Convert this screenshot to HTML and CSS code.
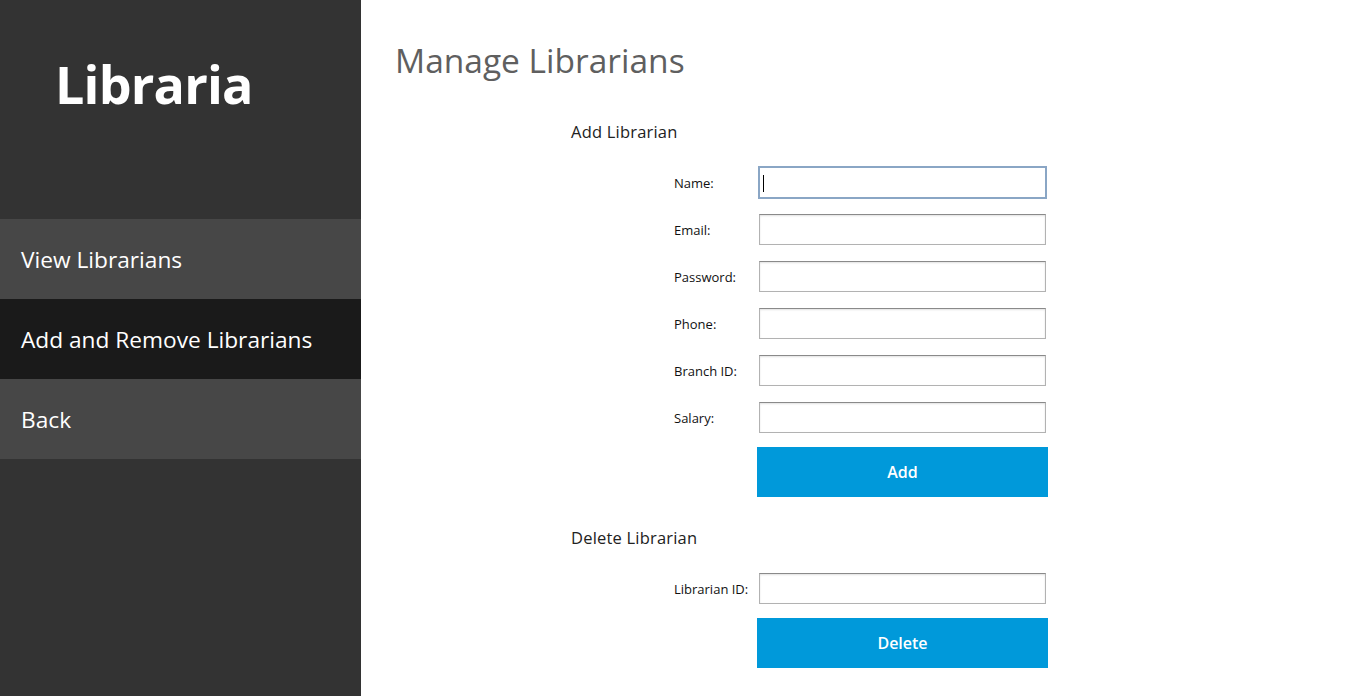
FILE: index.html
```html
<!DOCTYPE html>
<html lang="en">
<head>
<meta charset="utf-8">
<title>Libraria - Manage Librarians</title>
<link rel="stylesheet" href="styles.css">
</head>
<body>
<div class="app">
  <aside class="sidebar">
    <div class="logo">Libraria</div>
    <nav class="nav">
      <a class="nav-item" href="#">View Librarians</a>
      <a class="nav-item active" href="#">Add and Remove Librarians</a>
      <a class="nav-item" href="#">Back</a>
    </nav>
  </aside>
  <main class="main">
    <h1 class="title">Manage Librarians</h1>
    <section class="form-section add-section">
      <h2 class="section-title">Add Librarian</h2>
      <div class="form">
        <label class="label">Name:</label>
        <div class="field-wrap"><input class="field focused" type="text"><span class="caret"></span></div>
        <label class="label">Email:</label>
        <div class="field-wrap"><input class="field" type="text"></div>
        <label class="label">Password:</label>
        <div class="field-wrap"><input class="field" type="password"></div>
        <label class="label">Phone:</label>
        <div class="field-wrap"><input class="field" type="text"></div>
        <label class="label">Branch ID:</label>
        <div class="field-wrap"><input class="field" type="text"></div>
        <label class="label">Salary:</label>
        <div class="field-wrap"><input class="field" type="text"></div>
        <span></span>
        <button class="btn" type="button">Add</button>
      </div>
    </section>
    <section class="form-section delete-section">
      <h2 class="section-title">Delete Librarian</h2>
      <div class="form">
        <label class="label">Librarian ID:</label>
        <div class="field-wrap"><input class="field" type="text"></div>
        <span></span>
        <button class="btn" type="button">Delete</button>
      </div>
    </section>
  </main>
</div>
</body>
</html>
```

FILE: styles.css
```css
* { box-sizing: border-box; }
html, body { margin: 0; padding: 0; height: 100%; }
body {
  font-family: "Open Sans", Lato, "DejaVu Sans", sans-serif;
  background: #ffffff;
  overflow: hidden;
}
.app {
  display: flex;
  height: 696px;
}
.sidebar {
  width: 361px;
  flex: 0 0 361px;
  background: #333333;
  display: flex;
  flex-direction: column;
}
.logo {
  color: #ffffff;
  font-weight: 700;
  font-size: 52px;
  line-height: 60px;
  letter-spacing: -0.8px;
  padding: 54px 0 0 55px;
  height: 219px;
}
.nav {
  display: flex;
  flex-direction: column;
}
.nav-item {
  display: flex;
  align-items: center;
  height: 80px;
  padding-left: 21px;
  background: #474747;
  color: #ffffff;
  font-size: 22.7px;
  text-decoration: none;
}
.nav-item.active { background: #1a1a1a; }
.main {
  flex: 1;
  padding: 0 0 0 34px;
}
.title {
  margin: 0;
  padding-top: 38px;
  font-size: 33.5px;
  line-height: 44px;
  font-weight: 400;
  color: #5f5f5f;
}
.form-section {
  margin-left: 176px;
}
.section-title {
  margin: 0;
  font-size: 16.5px;
  font-weight: 400;
  color: #222222;
  line-height: 20px;
  letter-spacing: 0.2px;
}
.add-section { padding-top: 40px; }
.add-section .section-title { margin-bottom: 25px; }
.delete-section { padding-top: 31px; }
.delete-section .section-title { margin-bottom: 25px; }
.form {
  display: grid;
  grid-template-columns: 85px 291px;
  row-gap: 16px;
  margin-left: 103px;
  align-items: center;
}
.form .btn { margin-top: -2px; }
.label {
  font-size: 13px;
  color: #111111;
}
.field-wrap {
  position: relative;
  height: 31px;
  width: 287px;
}
.field {
  display: block;
  width: 287px;
  height: 31px;
  margin: 0;
  border: 1px solid #b2b2b2;
  border-top-color: #8a8a8a;
  box-shadow: inset 0 1px 2px rgba(0,0,0,0.12);
  background: #ffffff;
  outline: none;
  padding: 0 4px;
  font-size: 14px;
}
.field.focused {
  border: 2px solid #8aa6c5;
  box-shadow: none;
  width: 289px;
  margin-left: -1px;
  margin-top: -1px;
  height: 33px;
}
.caret {
  position: absolute;
  left: 4px;
  top: 8px;
  width: 1px;
  height: 17px;
  background: #000000;
}
.btn {
  width: 291px;
  height: 50px;
  margin-left: -2px;
  border: none;
  background: #0099da;
  color: #ffffff;
  font-family: inherit;
  font-size: 16px;
  font-weight: 600;
  cursor: pointer;
}
```
